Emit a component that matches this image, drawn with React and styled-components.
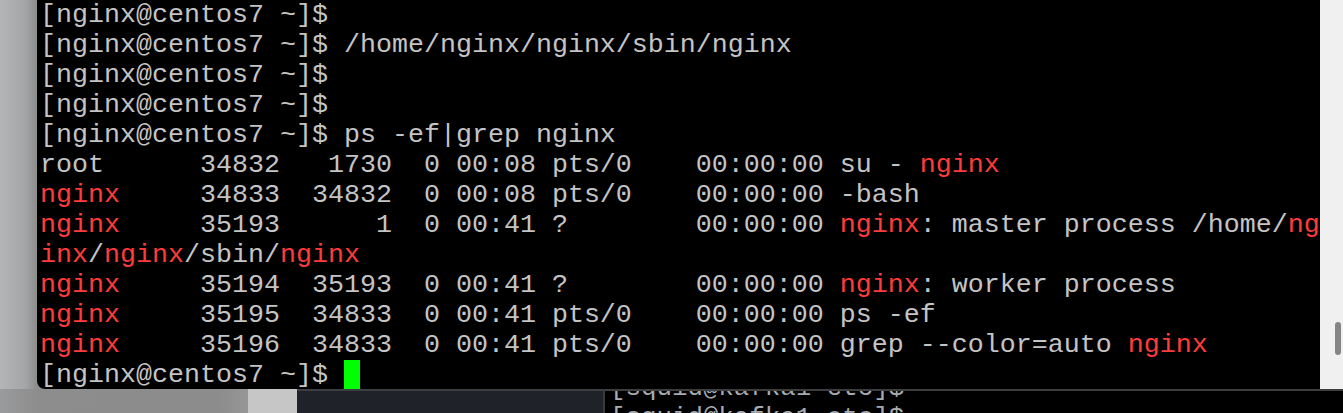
import React from 'react'
import styled, { createGlobalStyle } from 'styled-components'

const Global = createGlobalStyle`
body{
  margin: 0;
  background: #8e8e8e;
}
`

const lines = [
  [['[nginx@centos7 ~]$']],
  [['[nginx@centos7 ~]$ /home/nginx/nginx/sbin/nginx']],
  [['[nginx@centos7 ~]$']],
  [['[nginx@centos7 ~]$']],
  [['[nginx@centos7 ~]$ ps -ef|grep nginx']],
  [['root      34832   1730  0 00:08 pts/0    00:00:00 su - '], ['nginx', 1]],
  [['nginx', 1], ['     34833  34832  0 00:08 pts/0    00:00:00 -bash']],
  [['nginx', 1], ['     35193      1  0 00:41 ?        00:00:00 '], ['nginx', 1], [': master process /home/'], ['ng', 1]],
  [['inx', 1], ['/'], ['nginx', 1], ['/sbin/'], ['nginx', 1]],
  [['nginx', 1], ['     35194  35193  0 00:41 ?        00:00:00 '], ['nginx', 1], [': worker process']],
  [['nginx', 1], ['     35195  34833  0 00:41 pts/0    00:00:00 ps -ef']],
  [['nginx', 1], ['     35196  34833  0 00:41 pts/0    00:00:00 grep --color=auto '], ['nginx', 1]],
]

function App() {
  return (
    <Desk>
      <Global />
      <Top>
        <Side />
        <Term>
          <Screen>
            {lines.map((l, i) => (
              <Line key={i}>
                {l.map(([t, red], j) => <Seg key={j} $red={red}>{t}</Seg>)}
              </Line>
            ))}
            <Line>[nginx@centos7 ~]$ <Cursor /></Line>
          </Screen>
          <Track><Thumb /></Track>
        </Term>
      </Top>
      <Bottom>
        <Grey />
        <Light />
        <Dark />
        <Behind>
          <BLine>[squid@kafka1 etc]$</BLine>
          <BLine>[squid@kafka1 etc]$</BLine>
        </Behind>
      </Bottom>
    </Desk>
  )
}

export default App

const Desk = styled.div`
width: 1343px;
height: 413px;
overflow: hidden;
display: flex;
flex-direction: column;
background: #8e8e8e;
`

const Top = styled.div`
display: flex;
height: 389px;
position: relative;
z-index: 1;
`

const Side = styled.div`
width: 37px;
background: linear-gradient(to right, #b4b5b6, #a4a5a6 70%, #8c8c8c);
`

const Term = styled.div`
flex: 1;
display: flex;
background: #000;
border-bottom-left-radius: 8px;
overflow: hidden;
`

const Screen = styled.div`
flex: 1;
padding: 0 0 0 3px;
font-family: 'Liberation Mono', 'Courier New', monospace;
font-size: 26.66px;
line-height: 30px;
color: #c4c4c4;
white-space: pre;
`

const Line = styled.div`
height: 30px;
`

const Seg = styled.span`
color: ${p => p.$red ? '#ff3b3b' : '#c4c4c4'};
`

const Cursor = styled.span`
display: inline-block;
width: 16px;
height: 30px;
vertical-align: top;
background: #00ff00;
`

const Track = styled.div`
width: 24px;
background: #f0f0f0;
padding-top: 322px;
`

const Thumb = styled.div`
width: 6px;
height: 33px;
margin-left: 15px;
border-radius: 3px;
background: #858585;
`

const Bottom = styled.div`
display: flex;
height: 24px;
`

const Grey = styled.div`
width: 248px;
background: linear-gradient(to right, #9a9b9c, #8d8d8d 15%, #8c8c8c 88%, #969696);
`

const Light = styled.div`
width: 49px;
background: #c6c6c6;
`

const Dark = styled.div`
width: 306px;
background: #1f2228;
border-top: 2px solid #3b3e43;
`

const Behind = styled.div`
flex: 1;
background: #000;
border-top: 2px solid #3e3e3e;
border-left: 2px solid #3a3a3a;
overflow: hidden;
padding-left: 5px;
font-family: 'Liberation Mono', 'Courier New', monospace;
font-size: 25.8px;
line-height: 30px;
color: #a7abb0;
white-space: pre;
`

const BLine = styled.div`
height: 30px;
&:first-child{
  margin-top: -17px;
}
`
